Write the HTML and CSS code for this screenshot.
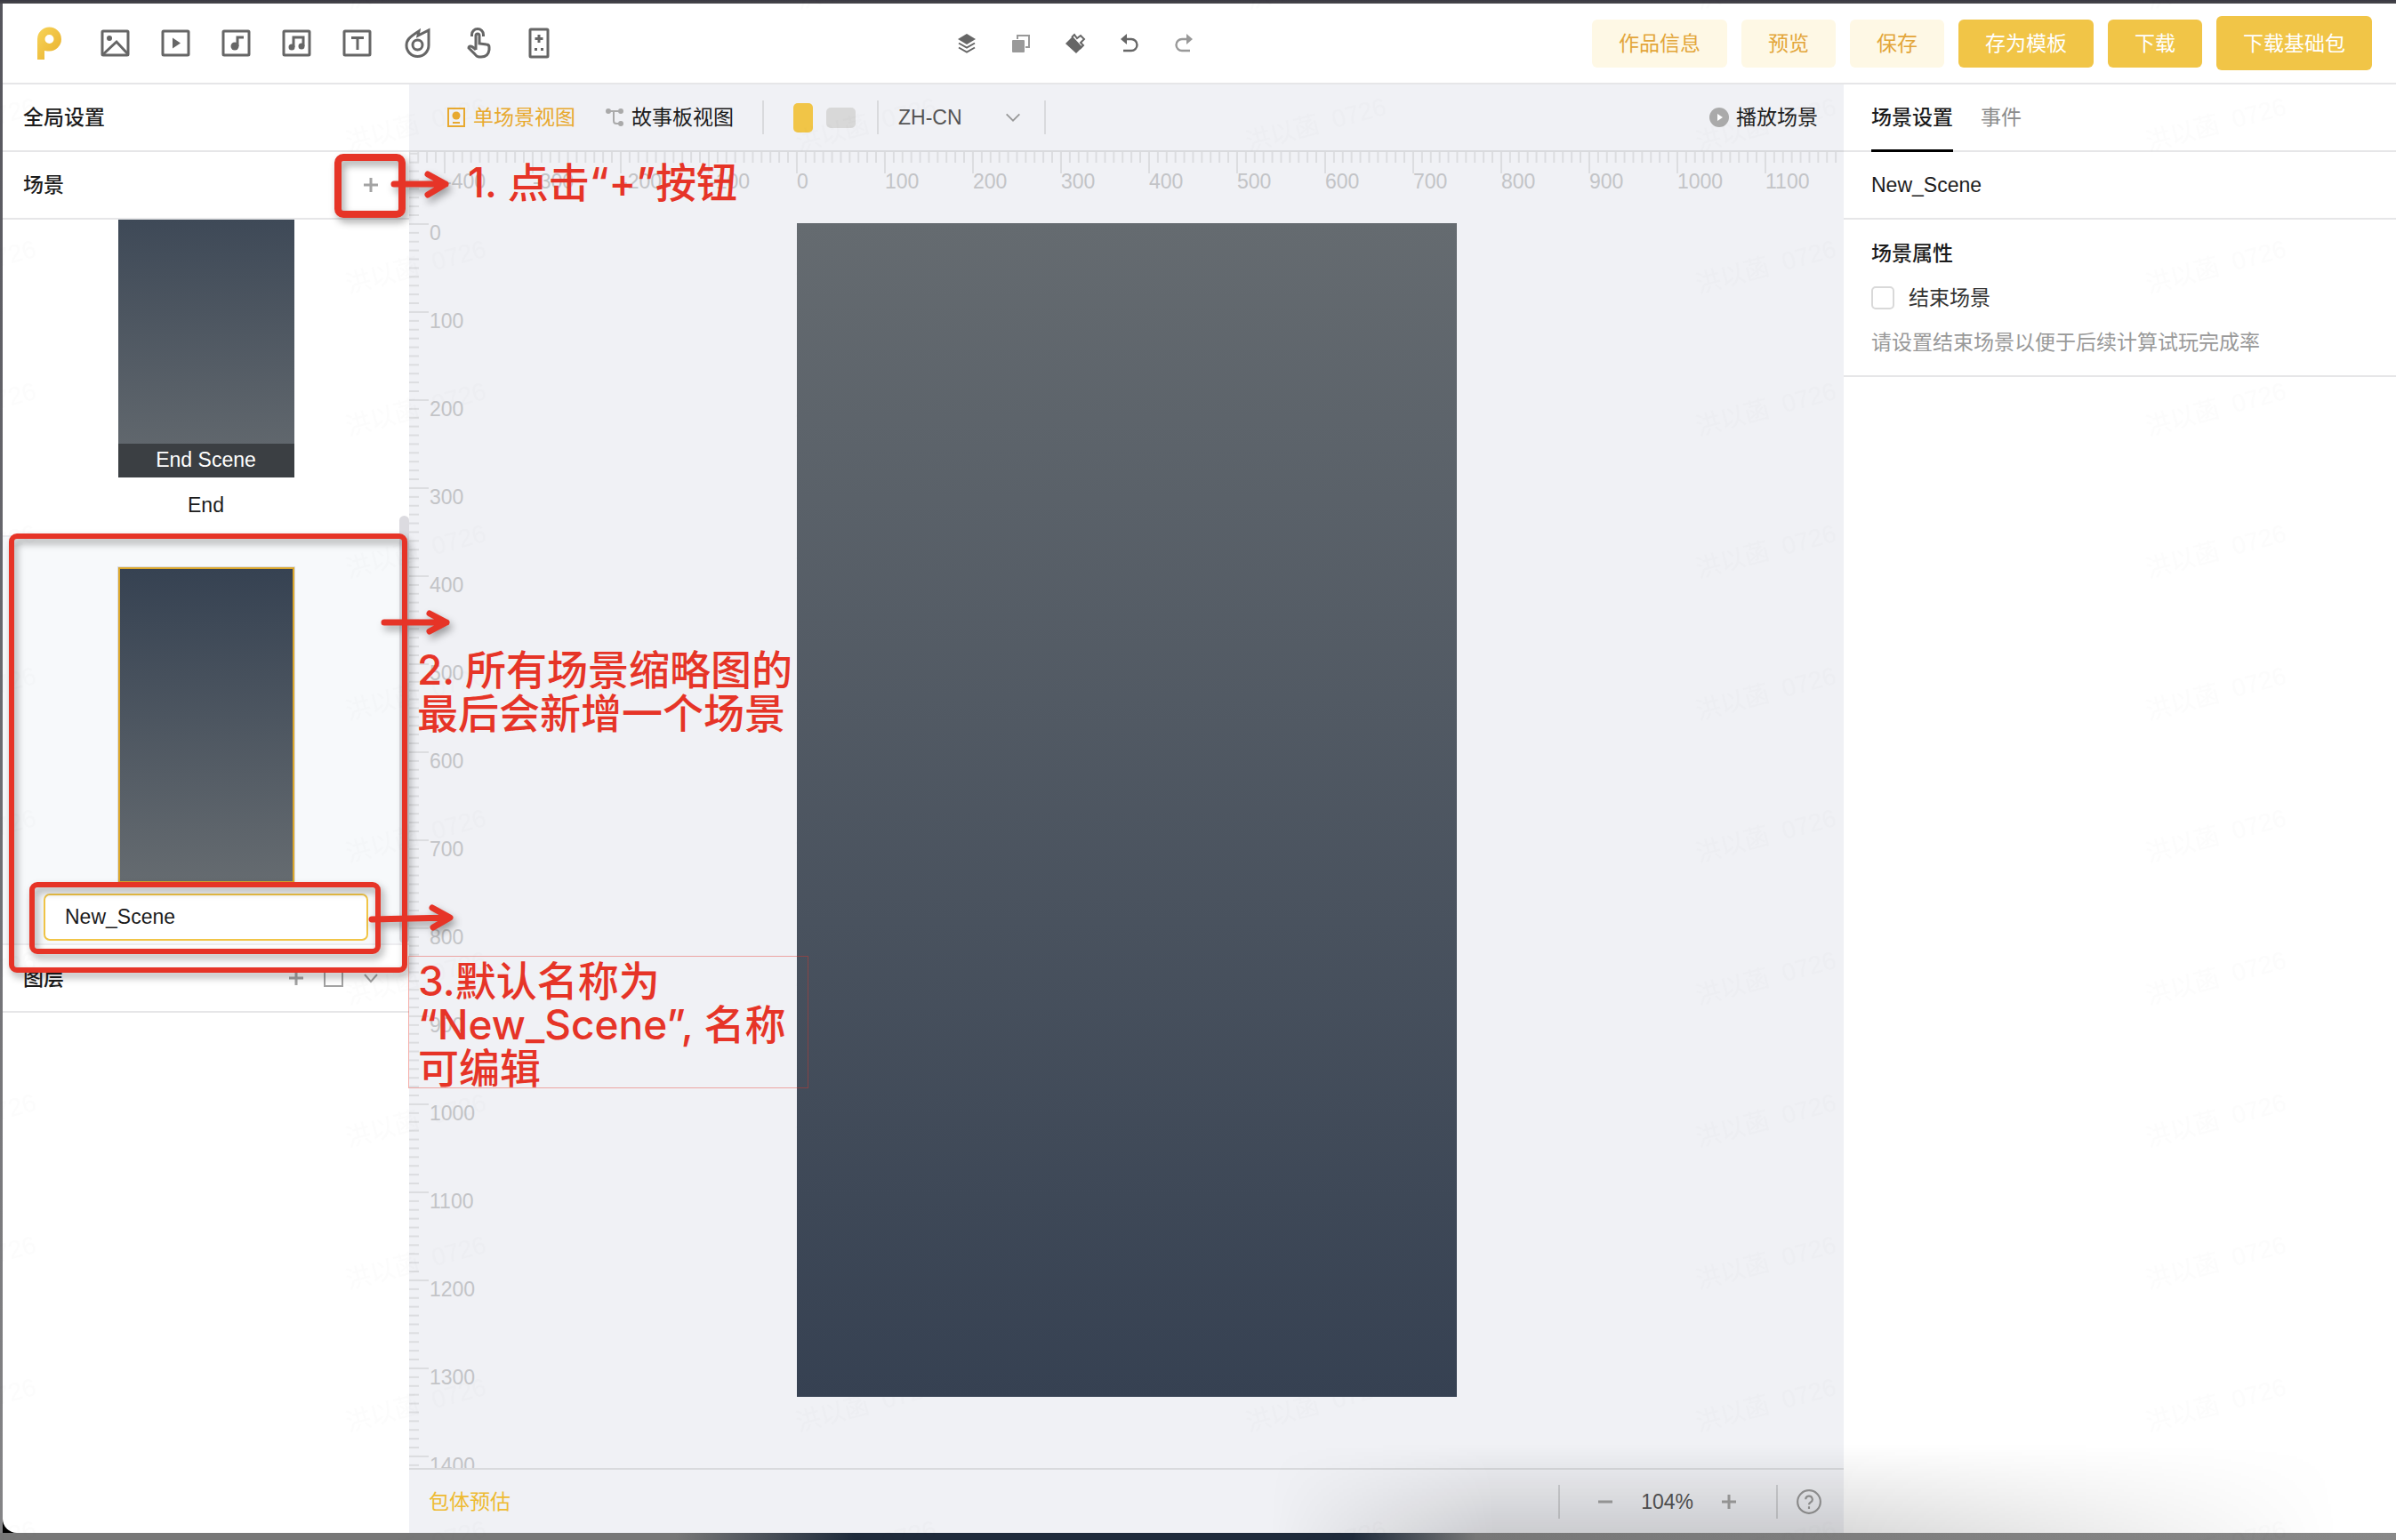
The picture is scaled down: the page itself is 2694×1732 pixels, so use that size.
FILE: index.html
```html
<!DOCTYPE html>
<html lang="zh-CN">
<head>
<meta charset="utf-8">
<title>New_Scene</title>
<link rel="stylesheet" href="styles.css">
</head>
<body>
<div class="window">
<div class="app">
  <header class="topbar">
    <nav class="tools" aria-label="素材">
      <a class="logo" href="#" aria-label="首页"><svg viewBox="0 0 41 41"><defs><linearGradient id="lg" x1="0" y1="0" x2="1" y2="1"><stop offset="0" stop-color="#f7d45a"/><stop offset="1" stop-color="#e9b02c"/></linearGradient></defs><path fill="url(#lg)" fill-rule="evenodd" d="M7 39V16a13.500 13.500 0 1 1 13.500 13.500c-3.500 0-5.500-.5-5.500-.5v10zM20.500 11a5 5 0 1 0 0 10 5 5 0 0 0 0-10z"/></svg></a>
      <button class="tool" aria-label="图片"><svg viewBox="0 0 41 41"><rect x="6" y="7" width="29" height="27" rx="1"/><path d="M7 33L22 19l13 14"/><circle class="fill" cx="14" cy="15" r="3"/></svg></button>
      <button class="tool" aria-label="视频"><svg viewBox="0 0 41 41"><rect x="6" y="7" width="29" height="27" rx="1"/><path class="fill" d="M17 14.500v12l9-6z"/></svg></button>
      <button class="tool" aria-label="音效"><svg viewBox="0 0 41 41"><rect x="6" y="7" width="29" height="27" rx="1"/><path d="M22 24V14h7"/><circle class="fill" cx="19" cy="24" r="4.500"/></svg></button>
      <button class="tool" aria-label="音乐"><svg viewBox="0 0 41 41"><rect x="6" y="7" width="29" height="27" rx="1"/><path d="M17 25V14h11v10"/><circle class="fill" cx="15" cy="25" r="3.500"/><circle class="fill" cx="26" cy="24" r="3.500"/></svg></button>
      <button class="tool" aria-label="文本"><svg viewBox="0 0 41 41"><rect x="6" y="7" width="29" height="27" rx="1"/><path d="M14 14.500h14M21 14.500V28"/></svg></button>
      <button class="tool" aria-label="特效"><svg viewBox="0 0 41 41"><path d="M33 6v17a12.500 12.500 0 0 1-25 0c0-6 3-9 14-16l-1 5z"/><circle cx="20.500" cy="22.500" r="5.500"/></svg></button>
      <button class="tool" aria-label="手势"><svg viewBox="0 0 41 41"><path d="M13.500 13v-2a6.500 6.500 0 0 1 13 0v2"/><path d="M18 28V12a2 2 0 0 1 4 0v9l8 1q3 0 3 3v3q-1 8-9 8h-2q-3 0-5-3l-7-7q0-2 2-2 2 0 6 4"/></svg></button>
      <button class="tool" aria-label="组件"><svg viewBox="0 0 41 41"><rect x="11" y="5" width="20" height="31" rx="1"/><path d="M21 11v9M16.500 15.500h9"/><path class="fill" d="M16 26h3v3h-3zM23 26h3v3h-3z"/></svg></button>
    </nav>
    <div class="edits">
      <button class="edit" aria-label="图层"><svg viewBox="0 0 24 24"><path class="fill" d="M12 1l10 6-10 6L2 7z"/><path d="M3 11.500l9 5 9-5M3 16.500l9 5 9-5"/></svg></button>
      <button class="edit dim" aria-label="复制"><svg viewBox="0 0 24 24"><path d="M8 7V3h13v13h-4"/><rect class="fill" x="2" y="8" width="14" height="14" rx="1"/></svg></button>
      <button class="edit" aria-label="格式刷"><svg viewBox="0 0 24 24"><path class="fill" d="M1 12l8-8 11 12-7 7z"/><path d="M8 5l3-3 3 4 4-3 4 4-4 4 3 3-4 4"/></svg></button>
      <button class="edit" aria-label="撤销"><svg viewBox="0 0 24 24"><path d="M6 7h8a6.500 6.500 0 0 1 0 13H5" stroke-width="2.400"/><path class="fill" d="M9 1v12L2 7z"/></svg></button>
      <button class="edit dim" aria-label="重做"><svg viewBox="0 0 24 24"><path d="M18 7h-8a6.500 6.500 0 0 0 0 13h9" stroke-width="2.400"/><path class="fill" d="M15 1v12l7-6z"/></svg></button>
    </div>
    <div class="actions">
      <button class="btn soft">作品信息</button>
      <button class="btn soft">预览</button>
      <button class="btn soft">保存</button>
      <button class="btn">存为模板</button>
      <button class="btn">下载</button>
      <button class="btn tall">下载基础包</button>
    </div>
  </header>

  <aside class="sidebar">
    <h2 class="row title">全局设置</h2>
    <div class="row"><h2 class="title">场景</h2><button class="mini" aria-label="新增场景"><svg viewBox="0 0 24 24"><path d="M12 4v16M4 12h16"/></svg></button></div>
    <ul class="scenes">
      <li class="scene"><div class="thumb"><span class="badge">End Scene</span></div><span class="scene-name">End</span></li>
      <li class="scene active"><div class="thumb"></div><input class="scene-input" aria-label="场景名称" value="New_Scene"></li>
      <li class="scrollbar" aria-hidden="true"></li>
    </ul>
    <div class="row"><h2 class="title">图层</h2>
      <div class="layer-tools">
        <button class="mini" aria-label="新增图层"><svg viewBox="0 0 24 24"><path d="M12 4v16M4 12h16"/></svg></button>
        <button class="mini" aria-label="新增分组"><svg viewBox="0 0 24 24"><path d="M2 3h20v18H2z" stroke-width="2"/></svg></button>
        <button class="mini" aria-label="折叠"><svg viewBox="0 0 24 24"><path d="M5 8l7 8 7-8" stroke-width="2"/></svg></button>
      </div>
    </div>
  </aside>

  <main class="stage">
    <div class="viewbar">
      <button class="view on"><svg viewBox="0 0 24 24"><rect x="3" y="2" width="18" height="20" fill="none" stroke="currentColor" stroke-width="2"/><circle cx="12" cy="10" r="4.500" fill="currentColor"/><path d="M8 18h8" stroke="currentColor" stroke-width="2"/></svg>单场景视图</button>
      <button class="view"><svg viewBox="0 0 24 24"><g fill="none" stroke="#aaa" stroke-width="2"><path d="M5 5h14M11 5v11q0 3 3 3h5"/></g><g fill="#aaa"><circle cx="5" cy="5" r="3"/><circle cx="19" cy="5" r="3"/><circle cx="19" cy="19" r="3"/></g></svg>故事板视图</button>
      <div class="orient"><button class="portrait" aria-label="竖屏"></button><button class="landscape" aria-label="横屏"></button></div>
      <label class="lang"><select aria-label="语言"><option>ZH-CN</option></select><svg viewBox="0 0 24 24"><path d="M4 8l8 8 8-8" fill="none" stroke="#999" stroke-width="2"/></svg></label>
      <button class="view play"><svg viewBox="0 0 24 24"><circle cx="12" cy="12" r="11" fill="#aaa"/><path d="M10 8v8l6-4z" fill="#fff"/></svg>播放场景</button>
    </div>
    <div class="workspace">
      <ol class="ruler-y"><li></li><li>0</li><li>100</li><li>200</li><li>300</li><li>400</li><li>500</li><li>600</li><li>700</li><li>800</li><li>900</li><li>1000</li><li>1100</li><li>1200</li><li>1300</li><li>1400</li></ol>
      <ol class="ruler-x"><li></li><li>-400</li><li>-300</li><li>-200</li><li>-100</li><li>0</li><li>100</li><li>200</li><li>300</li><li>400</li><li>500</li><li>600</li><li>700</li><li>800</li><li>900</li><li>1000</li><li>1100</li></ol>
      <div class="artboard"></div>
    </div>
    <footer class="statusbar">
      <a href="#" class="estimate">包体预估</a>
      <div class="zoom">
        <button class="mini" aria-label="缩小"><svg viewBox="0 0 24 24"><path d="M4 12h16"/></svg></button>
        <output>104%</output>
        <button class="mini" aria-label="放大"><svg viewBox="0 0 24 24"><path d="M12 4v16M4 12h16"/></svg></button>
      </div>
      <button class="help" aria-label="帮助"><svg viewBox="0 0 28 28"><circle cx="14" cy="14" r="12"/><path d="M10.500 11.500a3.500 3.500 0 1 1 5 3.200q-1.500.8-1.500 2.300M14 19v2.500"/></svg></button>
    </footer>
  </main>

  <aside class="inspector">
    <nav class="tabs"><a href="#" class="tab on">场景设置</a><a href="#" class="tab">事件</a></nav>
    <div class="name">New_Scene</div>
    <section class="props">
      <h3>场景属性</h3>
      <label class="check"><input type="checkbox">结束场景</label>
      <p class="hint">请设置结束场景以便于后续计算试玩完成率</p>
    </section>
  </aside>
</div>
</div>

<div class="dock-shadow"></div>

<svg class="watermark" aria-hidden="true"><defs><pattern id="wm" x="382" y="90" width="506" height="160" patternUnits="userSpaceOnUse"><text x="10" y="80" transform="rotate(-15 10 80)">洪以菡&#160; 0726</text></pattern></defs><rect width="100%" height="100%" fill="url(#wm)"/></svg>

<div class="notes">
  <svg class="marks" aria-hidden="true">
    <g stroke-width="8"><rect x="380" y="177" width="72" height="64" rx="6"/></g>
    <g stroke-width="6"><rect x="13" y="603" width="442" height="488" rx="6"/><rect x="36" y="995" width="389" height="75" rx="6"/></g>
    <g stroke-width="7"><path d="M443 207h58M481 196l20 11-20 12"/><path d="M432 700h70M483 690l19 10-19 10"/><path d="M418 1034l87-2M486 1021l20 11-19 11"/></g>
  </svg>
  <p class="note note-add">1. 点击“+”按钮</p>
  <p class="note note-list">2. 所有场景缩略图的<br>最后会新增一个场景</p>
  <p class="note note-name">3.默认名称为<br>“New_Scene”, 名称<br>可编辑</p>
</div>
</body>
</html>
```
FILE: styles.css
```css
* { box-sizing: border-box; }
body, h2, h3, p, ul, ol { margin: 0; padding: 0; }
ul, ol { list-style: none; }
body {
  position: relative;
  min-height: 100vh;
  padding: 4px 0 8px 3px;
  background:
    linear-gradient(90deg, #777 0, #777 760px, #1f2b3b 960px, #1f2b3b 1520px, #777 1660px, #888 100%) left bottom / 100% 8px no-repeat,
    linear-gradient(#3a3943, #47474b) left top / 100% 4px no-repeat,
    linear-gradient(#55555c, #858587);
  color: #1c1c1c;
  font: 23px/30px "Liberation Sans", "Noto Sans CJK SC", sans-serif;
}
button, input, select { font: inherit; color: inherit; }
button { border: 0; padding: 0; background: none; display: flex; align-items: center; justify-content: center; }
a { color: inherit; text-decoration: none; }
svg { display: block; }

.window { background: #000; }
.app {
  display: grid;
  grid-template: 91px 1fr / 457px 1fr 621px;
  min-height: calc(100vh - 12px);
  background: #fff;
  border-bottom-left-radius: 16px;
  overflow: hidden;
}

.topbar {
  grid-column: 1 / -1;
  display: grid;
  grid-template-columns: 1fr auto 1fr;
  align-items: center;
  padding: 0 27px 0 32px;
  border-bottom: 2px solid #e6e6e8;
}
.tools { display: flex; gap: 27px; }
.logo { margin-right: 6px; }
.logo svg, .tool svg { width: 41px; height: 41px; }
.tool svg, .edit svg, .mini svg { fill: none; stroke: #666; stroke-width: 3; }
.tool .fill { fill: #666; stroke: none; }
.edits { display: flex; gap: 37px; margin-right: 285px; }
.edit svg { width: 24px; height: 24px; stroke-width: 2; }
.edit .fill { fill: #666; stroke: none; }
.edit.dim svg { stroke: #999; }
.edit.dim .fill { fill: #999; }
.actions { display: flex; align-items: center; justify-content: flex-end; gap: 16px; }
.btn { height: 54px; padding: 0 30px; border-radius: 6px; background: #f1c547; color: #fff; white-space: nowrap; }
.btn.soft { background: #fef8e5; color: #e3a63a; }
.btn.tall { height: 61px; }

.row {
  display: flex;
  align-items: center;
  justify-content: space-between;
  height: 76px;
  padding: 0 31px 0 23px;
  border-bottom: 2px solid #e6e6e8;
}
.title { font-size: 23px; font-weight: 500; }
.mini svg { width: 24px; height: 24px; stroke: #a3a3a3; }
.layer-tools { display: flex; gap: 18px; }
.scenes {
  position: relative;
  display: flex;
  flex-direction: column;
  justify-content: flex-end;
  height: 816px;
  overflow: hidden;
}
.scene { display: flex; flex-direction: column; align-items: center; gap: 16px; padding: 32px 0 19px; border-bottom: 2px solid #ededf0; }
.scene.active { gap: 12px; padding: 34px 46px 3px; background: #f7f9fb; }
.thumb { display: flex; align-items: flex-end; flex: none; width: 198px; height: 352px; background: linear-gradient(#364252, #656b70); }
.active .thumb { height: 355px; border: 2px solid #dba72c; outline: 1px solid #dcdce0; }
.badge { width: 100%; padding: 3px 0 5px; background: #3b3f43; color: #fff; text-align: center; }
.scene-input { width: 100%; height: 53px; padding: 0 22px; border: 2px solid #f1c547; border-radius: 7px; background: #fff; outline: 0; }
.scrollbar { position: absolute; right: 0; top: 333px; width: 11px; height: 481px; border-radius: 6px; background: #dcdbe0; }

.stage { display: grid; grid-template-rows: 76px 1fr 73px; min-width: 0; background: #f0f1f5; }
.viewbar { display: flex; align-items: center; padding: 0 29px 0 41px; border-bottom: 2px solid #d9dadd; }
.view { gap: 7px; margin-right: 32px; white-space: nowrap; }
.view svg { width: 24px; height: 24px; }
.view.on { color: #e8a92f; }
.play { margin: 0 0 0 auto; }
.orient { display: flex; align-items: center; gap: 15px; height: 38px; padding: 0 24px 0 33px; border: solid #d9dadd; border-width: 0 2px; }
.portrait { width: 22px; height: 33px; border-radius: 5px; background: #f1c547; }
.landscape { width: 33px; height: 23px; border-radius: 5px; background: #d8d8d8; }
.lang { display: flex; align-items: center; gap: 46px; height: 38px; padding: 0 24px 0 22px; border-right: 2px solid #d9dadd; color: #555; }
.lang select { appearance: none; border: 0; padding: 0; background: none; }
.lang svg { width: 22px; height: 22px; }

.workspace { display: grid; grid-template: minmax(0, 1fr) / minmax(0, 1fr); overflow: hidden; }
.workspace > * { grid-area: 1 / 1; }
.ruler-x, .ruler-y { display: flex; color: #c3c4c7; --tick: #dcdde0; }
.ruler-x { margin-left: -60px; height: 50px; }
.ruler-x li {
  flex: none;
  width: 99px;
  padding: 18px 0 0 1px;
  background:
    linear-gradient(var(--tick), var(--tick)) 0 0 / 2px 24px no-repeat,
    linear-gradient(90deg, var(--tick) 2px, transparent 2px) 0 0 / 10% 12px repeat-x;
}
.ruler-y { flex-direction: column; height: 0; margin-top: -19px; }
.ruler-y li {
  flex: none;
  height: 99px;
  padding-left: 23px;
  line-height: 23px;
  background:
    linear-gradient(var(--tick), var(--tick)) 0 0 / 22px 2px no-repeat,
    linear-gradient(var(--tick) 2px, transparent 2px) 0 0 / 11px 10% repeat-y;
}
.artboard { justify-self: center; width: 742px; height: 1320px; margin-top: 80px; background: linear-gradient(#656b70, #364152); z-index: 1; }

.statusbar { display: flex; align-items: center; padding: 0 24px 0 22px; border-top: 2px solid #d9dadd; }
.estimate { margin-right: auto; color: #eebb33; }
.zoom { display: flex; align-items: center; gap: 28px; height: 38px; padding: 0 41px 0 39px; border: solid #d0d1d4; border-width: 0 2px; color: #555; }
.help { margin-left: 20px; }
.help svg { width: 30px; height: 30px; fill: none; stroke: #999; stroke-width: 2; }

.tabs { display: flex; gap: 31px; height: 76px; padding: 0 31px; border-bottom: 2px solid #e6e6e8; }
.tab { display: flex; align-items: center; height: 76px; color: #8c8c8c; border-bottom: 3px solid transparent; }
.tab.on { color: #1c1c1c; font-weight: 500; border-color: #000; }
.name { display: flex; align-items: center; height: 76px; padding: 0 31px; border-bottom: 2px solid #e6e6e8; }
.props { display: grid; gap: 20px; padding: 23px 31px 22px; border-bottom: 2px solid #e6e6e8; }
.props h3 { font-size: 23px; font-weight: 500; }
.check { display: flex; align-items: center; gap: 16px; color: #333; }
.check input { appearance: none; width: 26px; height: 26px; margin: 0; border: 2px solid #d9d9d9; border-radius: 5px; background: #fff; }
.hint { color: #999; }

.dock-shadow {
  position: absolute;
  right: 0;
  bottom: 8px;
  width: 47%;
  height: 100px;
  pointer-events: none;
  background: linear-gradient(transparent, rgba(0, 0, 0, .15));
  mask-image: linear-gradient(90deg, transparent, #000 20%, #000 50%, transparent 95%);
}
.watermark { position: absolute; inset: 0; width: 100%; height: 100%; pointer-events: none; fill: rgba(0, 0, 0, .012); font-size: 28px; }

.notes { position: absolute; inset: 0; pointer-events: none; z-index: 2; color: #e63427; }
.marks { width: 100%; height: 100%; fill: none; stroke: #e63427; stroke-linecap: round; stroke-linejoin: round; filter: drop-shadow(3px 5px 4px rgba(0, 0, 0, .35)); }
.note { position: absolute; font: 500 46px/49px Inter, "Noto Sans CJK SC", sans-serif; white-space: nowrap; }
.note-add { left: 526px; top: 181px; }
.note-list { left: 469px; top: 729px; }
.note-name { left: 459px; top: 1075px; width: 450px; height: 149px; padding: 3px 10px 0; border: 1px solid rgba(230, 52, 39, .4); }
```
